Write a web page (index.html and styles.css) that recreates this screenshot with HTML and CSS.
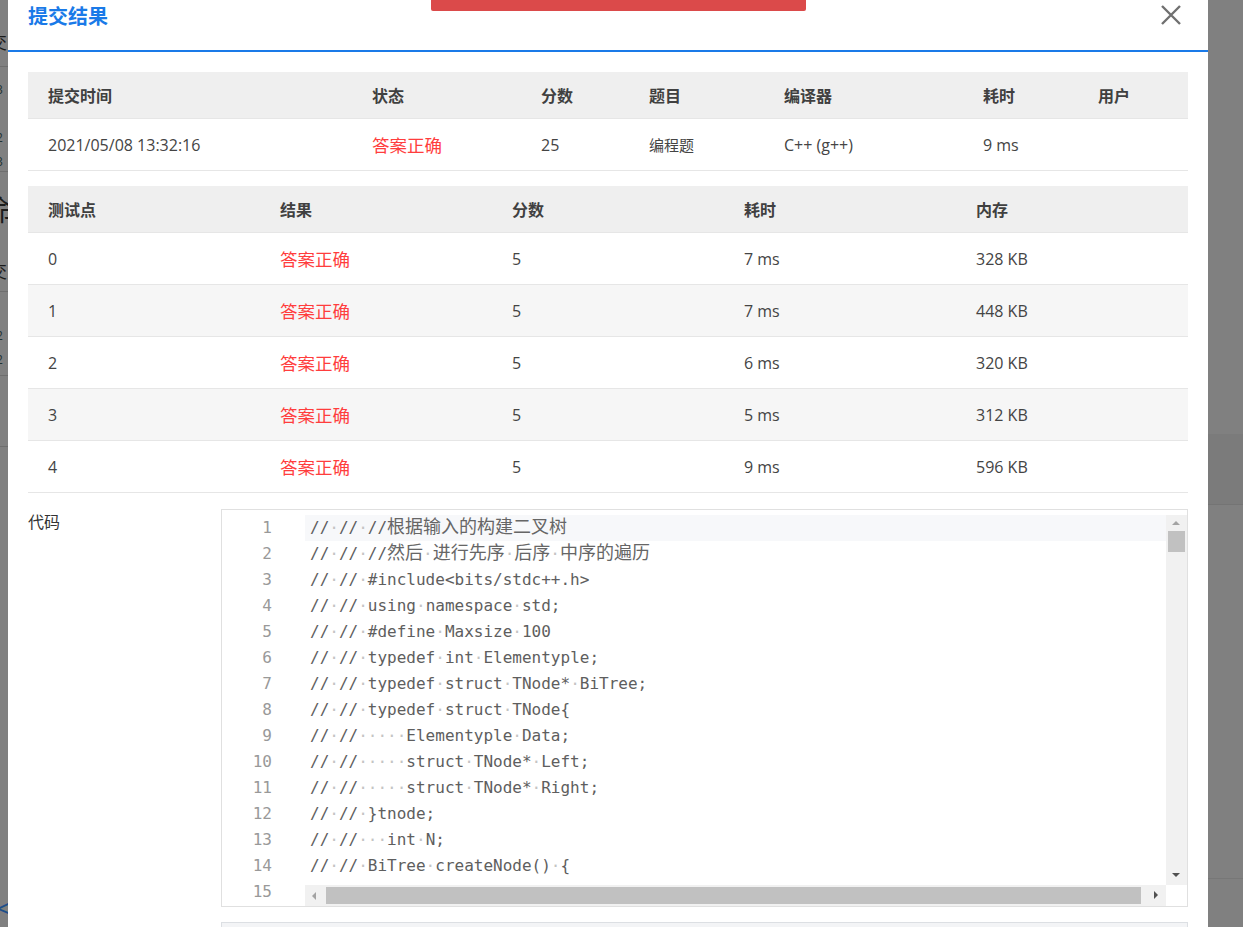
FILE: index.html
```html
<!DOCTYPE html>
<html lang="zh-CN">
<head>
<meta charset="utf-8">
<title>提交结果</title>
<link rel="stylesheet" href="styles.css">
</head>
<body>
<div class="backdrop">
  <span class="frag f1">J</span>
  <span class="frag f2">交</span>
  <span class="bline b1"></span>
  <span class="frag f3">3<br>-<br>2<br>3</span>
  <span class="bline b2"></span>
  <span class="frag f4">命</span>
  <span class="frag f5">交</span>
  <span class="bline b3"></span>
  <span class="frag f6">-<br>2<br>2</span>
  <span class="bline b4"></span>
  <span class="bline b5"></span>
  <span class="chev">&lt;</span>
  <span class="band band1"></span>
  <span class="band band2"></span>
</div>

<div class="modal">
  <div class="modal-header">
    <h2 class="modal-title">提交结果</h2>
    <button class="close" aria-label="关闭">
      <svg width="22" height="22" viewBox="0 0 22 22"><path d="M2 2 L20 20 M20 2 L2 20" stroke="#707070" stroke-width="2.4" fill="none"/></svg>
    </button>
  </div>
  <div class="modal-body">
    <table class="tbl tbl-sub">
      <colgroup><col style="width:324px"><col style="width:169px"><col style="width:108px"><col style="width:135px"><col style="width:199px"><col style="width:115px"><col style="width:110px"></colgroup>
      <thead><tr><th>提交时间</th><th>状态</th><th>分数</th><th>题目</th><th>编译器</th><th>耗时</th><th>用户</th></tr></thead>
      <tbody><tr><td>2021/05/08 13:32:16</td><td class="ok big">答案正确</td><td>25</td><td class="small">编程题</td><td>C++ (g++)</td><td>9 ms</td><td></td></tr></tbody>
    </table>

    <table class="tbl tbl-cases">
      <thead><tr><th>测试点</th><th>结果</th><th>分数</th><th>耗时</th><th>内存</th></tr></thead>
      <tbody>
        <tr><td>0</td><td class="ok big">答案正确</td><td>5</td><td>7 ms</td><td>328 KB</td></tr>
        <tr class="alt"><td>1</td><td class="ok big">答案正确</td><td>5</td><td>7 ms</td><td>448 KB</td></tr>
        <tr><td>2</td><td class="ok big">答案正确</td><td>5</td><td>6 ms</td><td>320 KB</td></tr>
        <tr class="alt"><td>3</td><td class="ok big">答案正确</td><td>5</td><td>5 ms</td><td>312 KB</td></tr>
        <tr><td>4</td><td class="ok big">答案正确</td><td>5</td><td>9 ms</td><td>596 KB</td></tr>
      </tbody>
    </table>

    <div class="code-section">
      <div class="code-label">代码</div>
      <div class="code-col">
        <div class="code-box">
          <div class="gutter">
            <div>1</div><div>2</div><div>3</div><div>4</div><div>5</div><div>6</div><div>7</div><div>8</div><div>9</div><div>10</div><div>11</div><div>12</div><div>13</div><div>14</div><div>15</div>
          </div>
          <div class="code">
            <div class="ln active">//<i>·</i>//<i>·</i>//<span class="zh">根据输入的构建二叉树</span></div>
            <div class="ln">//<i>·</i>//<i>·</i>//<span class="zh">然后</span><i>·</i><span class="zh">进行先序</span><i>·</i><span class="zh">后序</span><i>·</i><span class="zh">中序的遍历</span></div>
            <div class="ln">//<i>·</i>//<i>·</i>#include&lt;bits/stdc++.h&gt;</div>
            <div class="ln">//<i>·</i>//<i>·</i>using<i>·</i>namespace<i>·</i>std;</div>
            <div class="ln">//<i>·</i>//<i>·</i>#define<i>·</i>Maxsize<i>·</i>100</div>
            <div class="ln">//<i>·</i>//<i>·</i>typedef<i>·</i>int<i>·</i>Elementyple;</div>
            <div class="ln">//<i>·</i>//<i>·</i>typedef<i>·</i>struct<i>·</i>TNode*<i>·</i>BiTree;</div>
            <div class="ln">//<i>·</i>//<i>·</i>typedef<i>·</i>struct<i>·</i>TNode{</div>
            <div class="ln">//<i>·</i>//<i>·····</i>Elementyple<i>·</i>Data;</div>
            <div class="ln">//<i>·</i>//<i>·····</i>struct<i>·</i>TNode*<i>·</i>Left;</div>
            <div class="ln">//<i>·</i>//<i>·····</i>struct<i>·</i>TNode*<i>·</i>Right;</div>
            <div class="ln">//<i>·</i>//<i>·</i>}tnode;</div>
            <div class="ln">//<i>·</i>//<i>···</i>int<i>·</i>N;</div>
            <div class="ln">//<i>·</i>//<i>·</i>BiTree<i>·</i>createNode()<i>·</i>{</div>
            <div class="ln">//<i>·</i>//<i>·····</i>BiTree<i>·</i>T<i>·</i>=<i>·</i>(BiTree)malloc(sizeof(tnode));</div>
          </div>
          <div class="vscroll">
            <span class="arr up"></span>
            <span class="vthumb"></span>
            <span class="arr down"></span>
          </div>
          <div class="hscroll">
            <span class="arr left"></span>
            <span class="hthumb"></span>
            <span class="arr right"></span>
          </div>
          <div class="corner"></div>
        </div>
        <div class="next-box"></div>
      </div>
    </div>
  </div>
</div>

<div class="toast"></div>
</body>
</html>
```

FILE: styles.css
```css
html, body {
  margin: 0;
  padding: 0;
  height: 100%;
  overflow: hidden;
}
body {
  background: #808080;
  font-family: "Open Sans", "Noto Sans CJK SC", "Noto Sans", sans-serif;
  color: #333;
  position: relative;
}

/* dimmed page behind the dialog */
.backdrop {
  position: absolute;
  inset: 0;
  overflow: hidden;
}
.frag {
  position: absolute;
  color: #1b1b1b;
  font-size: 20px;
  line-height: 1;
}
.f1 { left: -6px; top: -14px; }
.f2 { left: -11px; top: 33px; font-size: 18px; }
.f3 { left: -4px; top: 78px; font-size: 12px; line-height: 24px; color: #233; }
.f4 { left: -14px; top: 196px; font-size: 28px; }
.f5 { left: -11px; top: 262px; font-size: 18px; }
.f6 { left: -4px; top: 300px; font-size: 12px; line-height: 24px; color: #233; }
.bline {
  position: absolute;
  left: 0;
  width: 8px;
  height: 1px;
  background: #6e6e6e;
}
.b1 { top: 66px; }
.b2 { top: 171px; }
.b3 { top: 291px; }
.b4 { top: 375px; }
.b5 { top: 446px; }
.chev {
  position: absolute;
  left: -4px;
  top: 893px;
  color: #1e4f8a;
  font-size: 30px;
  line-height: 1;
}
.band {
  position: absolute;
  right: 0;
  width: 40px;
}
.band1 { top: 434px; height: 70px; background: #7b7b7b; border-bottom: 1px solid #747474; }
.band2 { top: 878px; height: 1px; background: #777; }

/* dialog */
.modal {
  position: absolute;
  left: 8px;
  top: 0;
  width: 1200px;
  bottom: -40px;
  background: #fff;
}
.modal-header {
  height: 50px;
  border-bottom: 2px solid #1a7ae8;
  position: relative;
}
.modal-title {
  margin: 0;
  padding: 3px 0 0 20px;
  font-family: "Noto Sans CJK SC", sans-serif;
  font-size: 20px;
  line-height: 26px;
  font-weight: 700;
  color: #1a7ae8;
}
.close {
  position: absolute;
  left: 1151px;
  top: 3px;
  width: 24px;
  height: 24px;
  padding: 1px;
  border: 0;
  background: none;
  cursor: pointer;
}
.close svg { display: block; }

.modal-body {
  padding: 20px 20px 0 20px;
}

.tbl {
  width: 1160px;
  border-collapse: collapse;
  table-layout: fixed;
  font-size: 16px;
}
.tbl th, .tbl td {
  text-align: left;
  padding: 0 0 0 20px;
  border-bottom: 1px solid #e6e6e6;
  white-space: nowrap;
  line-height: 24px;
}
.tbl th {
  height: 46px;
  background: #efefef;
  font-family: "Noto Sans CJK SC", sans-serif;
  font-weight: 700;
  color: #404040;
}
.tbl td {
  height: 51px;
  color: #444;
}
.tbl tr.alt td { background: #f6f6f6; }
.tbl td.ok { color: #ff3d3d; }
.tbl td.big { font-size: 17.5px; }
.tbl td.small { font-size: 15px; }
.tbl-cases { margin-top: 15px; }
.tbl-cases th, .tbl-cases td { width: 20%; }

/* code */
.code-section {
  display: grid;
  grid-template-columns: 193px 967px;
  margin-top: 16px;
}
.code-label {
  font-family: "Noto Sans CJK SC", sans-serif;
  font-size: 16px;
  line-height: 24px;
  color: #333;
}
.code-box {
  height: 398px;
  box-sizing: border-box;
  border: 1px solid #e0e0e0;
  padding-top: 5px;
  display: grid;
  grid-template-columns: 83px 1fr 21px;
  grid-template-rows: 370px 21px;
  overflow: hidden;
  font-family: "DejaVu Sans Mono", "Liberation Mono", "Noto Sans CJK SC", monospace;
  font-size: 16px;
}
.gutter {
  grid-column: 1;
  grid-row: 1 / 3;
  overflow: hidden;
  color: #999;
  text-align: right;
  padding-right: 33px;
}
.gutter div, .ln {
  height: 26px;
  line-height: 26px;
}
.code {
  grid-column: 2;
  grid-row: 1 / 3;
  overflow: hidden;
  color: #5e5e5e;
}
.ln {
  padding-left: 5px;
  white-space: pre;
}
.ln.active { background: #f7f8fa; }
.ln i {
  font-style: normal;
  color: #c4c4c4;
}
.zh {
  font-family: "Noto Sans CJK SC", sans-serif;
  font-size: 18px;
  line-height: 1;
  color: #666;
}
.vscroll {
  grid-column: 3;
  grid-row: 1;
  background: #f1f1f1;
  position: relative;
}
.hscroll {
  grid-column: 2;
  grid-row: 2;
  background: #f1f1f1;
  position: relative;
  z-index: 1;
}
.corner {
  grid-column: 3;
  grid-row: 2;
  background: #fff;
}
.vthumb {
  position: absolute;
  left: 2px;
  top: 16px;
  width: 17px;
  height: 21px;
  background: #c1c1c1;
}
.hthumb {
  position: absolute;
  left: 21px;
  top: 2px;
  bottom: 2px;
  right: 25px;
  background: #c1c1c1;
}
.arr {
  position: absolute;
  width: 0;
  height: 0;
}
.arr.up {
  left: 6px;
  top: 6px;
  border-left: 4px solid transparent;
  border-right: 4px solid transparent;
  border-bottom: 4px solid #a3a3a3;
}
.arr.down {
  left: 6px;
  bottom: 8px;
  border-left: 4px solid transparent;
  border-right: 4px solid transparent;
  border-top: 4px solid #505050;
}
.arr.left {
  left: 7px;
  top: 7px;
  border-top: 4px solid transparent;
  border-bottom: 4px solid transparent;
  border-right: 4px solid #a3a3a3;
}
.arr.right {
  right: 8px;
  top: 6px;
  border-top: 4px solid transparent;
  border-bottom: 4px solid transparent;
  border-left: 4px solid #505050;
}
.next-box {
  margin-top: 15px;
  height: 30px;
  border: 1px solid #dcdfe3;
  background: #f3f4f6;
}

/* notification strip at top */
.toast {
  position: absolute;
  left: 431px;
  top: 0;
  width: 375px;
  height: 11px;
  background: #db4a4a;
  border-radius: 0 0 2px 2px;
}
```
